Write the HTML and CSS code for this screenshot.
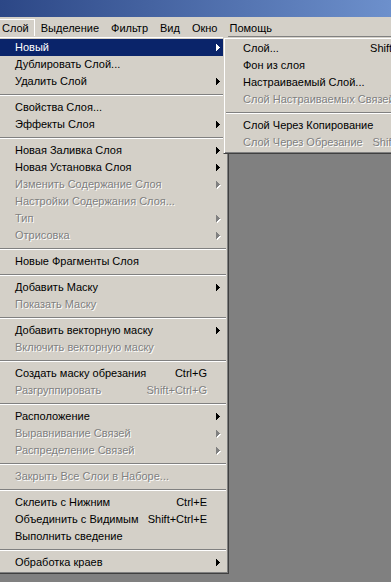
FILE: index.html
```html
<!DOCTYPE html>
<html lang="ru">
<head>
    <meta charset="UTF-8">
    <meta name="viewport" content="width=device-width, initial-scale=1.0">
    <title>Слой</title>
    <link rel="stylesheet" href="styles.css">
</head>
<body>

    <!-- Заголовок окна -->
    <div class="titlebar"></div>

    <!-- Строка меню -->
    <div class="menubar">
        <span class="mb-item open">Слой</span>
        <span class="mb-item">Выделение</span>
        <span class="mb-item">Фильтр</span>
        <span class="mb-item">Вид</span>
        <span class="mb-item">Окно</span>
        <span class="mb-item">Помощь</span>
    </div>

    <!-- Рабочая область -->
    <div class="workspace">

        <!-- Меню Слой -->
        <div class="menu main-menu">
            <div class="item active"><span class="label">Новый</span><span class="key"></span><span class="arrow"><svg width="4" height="7" viewBox="0 0 4 7"><path d="M0 0h1v7h-1zM1 1h1v5h-1zM2 2h1v3h-1zM3 3h1v1h-1z"/></svg></span></div>
            <div class="item"><span class="label">Дублировать Слой...</span><span class="key"></span><span class="arrow"></span></div>
            <div class="item"><span class="label">Удалить Слой</span><span class="key"></span><span class="arrow"><svg width="4" height="7" viewBox="0 0 4 7"><path d="M0 0h1v7h-1zM1 1h1v5h-1zM2 2h1v3h-1zM3 3h1v1h-1z"/></svg></span></div>
            <div class="sep"></div>
            <div class="item"><span class="label">Свойства Слоя...</span><span class="key"></span><span class="arrow"></span></div>
            <div class="item"><span class="label">Эффекты Слоя</span><span class="key"></span><span class="arrow"><svg width="4" height="7" viewBox="0 0 4 7"><path d="M0 0h1v7h-1zM1 1h1v5h-1zM2 2h1v3h-1zM3 3h1v1h-1z"/></svg></span></div>
            <div class="sep"></div>
            <div class="item"><span class="label">Новая Заливка Слоя</span><span class="key"></span><span class="arrow"><svg width="4" height="7" viewBox="0 0 4 7"><path d="M0 0h1v7h-1zM1 1h1v5h-1zM2 2h1v3h-1zM3 3h1v1h-1z"/></svg></span></div>
            <div class="item"><span class="label">Новая Установка Слоя</span><span class="key"></span><span class="arrow"><svg width="4" height="7" viewBox="0 0 4 7"><path d="M0 0h1v7h-1zM1 1h1v5h-1zM2 2h1v3h-1zM3 3h1v1h-1z"/></svg></span></div>
            <div class="item off"><span class="label">Изменить Содержание Слоя</span><span class="key"></span><span class="arrow"><svg width="4" height="7" viewBox="0 0 4 7"><path d="M0 0h1v7h-1zM1 1h1v5h-1zM2 2h1v3h-1zM3 3h1v1h-1z"/></svg></span></div>
            <div class="item off"><span class="label">Настройки Содержания Слоя...</span><span class="key"></span><span class="arrow"></span></div>
            <div class="item off"><span class="label">Тип</span><span class="key"></span><span class="arrow"><svg width="4" height="7" viewBox="0 0 4 7"><path d="M0 0h1v7h-1zM1 1h1v5h-1zM2 2h1v3h-1zM3 3h1v1h-1z"/></svg></span></div>
            <div class="item off"><span class="label">Отрисовка</span><span class="key"></span><span class="arrow"><svg width="4" height="7" viewBox="0 0 4 7"><path d="M0 0h1v7h-1zM1 1h1v5h-1zM2 2h1v3h-1zM3 3h1v1h-1z"/></svg></span></div>
            <div class="sep"></div>
            <div class="item"><span class="label">Новые Фрагменты Слоя</span><span class="key"></span><span class="arrow"></span></div>
            <div class="sep"></div>
            <div class="item"><span class="label">Добавить Маску</span><span class="key"></span><span class="arrow"><svg width="4" height="7" viewBox="0 0 4 7"><path d="M0 0h1v7h-1zM1 1h1v5h-1zM2 2h1v3h-1zM3 3h1v1h-1z"/></svg></span></div>
            <div class="item off"><span class="label">Показать Маску</span><span class="key"></span><span class="arrow"></span></div>
            <div class="sep"></div>
            <div class="item"><span class="label">Добавить векторную маску</span><span class="key"></span><span class="arrow"><svg width="4" height="7" viewBox="0 0 4 7"><path d="M0 0h1v7h-1zM1 1h1v5h-1zM2 2h1v3h-1zM3 3h1v1h-1z"/></svg></span></div>
            <div class="item off"><span class="label">Включить векторную маску</span><span class="key"></span><span class="arrow"></span></div>
            <div class="sep"></div>
            <div class="item"><span class="label">Создать маску обрезания</span><span class="key">Ctrl+G</span><span class="arrow"></span></div>
            <div class="item off"><span class="label">Разгруппировать</span><span class="key">Shift+Ctrl+G</span><span class="arrow"></span></div>
            <div class="sep"></div>
            <div class="item"><span class="label">Расположение</span><span class="key"></span><span class="arrow"><svg width="4" height="7" viewBox="0 0 4 7"><path d="M0 0h1v7h-1zM1 1h1v5h-1zM2 2h1v3h-1zM3 3h1v1h-1z"/></svg></span></div>
            <div class="item off"><span class="label">Выравнивание Связей</span><span class="key"></span><span class="arrow"><svg width="4" height="7" viewBox="0 0 4 7"><path d="M0 0h1v7h-1zM1 1h1v5h-1zM2 2h1v3h-1zM3 3h1v1h-1z"/></svg></span></div>
            <div class="item off"><span class="label">Распределение Связей</span><span class="key"></span><span class="arrow"><svg width="4" height="7" viewBox="0 0 4 7"><path d="M0 0h1v7h-1zM1 1h1v5h-1zM2 2h1v3h-1zM3 3h1v1h-1z"/></svg></span></div>
            <div class="sep"></div>
            <div class="item off"><span class="label">Закрыть Все Слои в Наборе...</span><span class="key"></span><span class="arrow"></span></div>
            <div class="sep"></div>
            <div class="item"><span class="label">Склеить с Нижним</span><span class="key">Ctrl+E</span><span class="arrow"></span></div>
            <div class="item"><span class="label">Объединить с Видимым</span><span class="key">Shift+Ctrl+E</span><span class="arrow"></span></div>
            <div class="item"><span class="label">Выполнить сведение</span><span class="key"></span><span class="arrow"></span></div>
            <div class="sep"></div>
            <div class="item"><span class="label">Обработка краев</span><span class="key"></span><span class="arrow"><svg width="4" height="7" viewBox="0 0 4 7"><path d="M0 0h1v7h-1zM1 1h1v5h-1zM2 2h1v3h-1zM3 3h1v1h-1z"/></svg></span></div>
        </div>

        <!-- Подменю Новый -->
        <div class="menu sub-menu">
            <div class="item"><span class="label">Слой...</span><span class="key">Shift+Ctrl+N</span><span class="arrow"></span></div>
            <div class="item"><span class="label">Фон из слоя</span><span class="key"></span><span class="arrow"></span></div>
            <div class="item"><span class="label">Настраиваемый Слой...</span><span class="key"></span><span class="arrow"></span></div>
            <div class="item off"><span class="label">Слой Настраиваемых Связей</span><span class="key"></span><span class="arrow"></span></div>
            <div class="sep"></div>
            <div class="item"><span class="label">Слой Через Копирование</span><span class="key">Ctrl+J</span><span class="arrow"></span></div>
            <div class="item off"><span class="label">Слой Через Обрезание</span><span class="key">Shift+Ctrl+J</span><span class="arrow"></span></div>
        </div>

    </div>

</body>
</html>
```

FILE: styles.css
```css
* {
    box-sizing: border-box;
}
body {
    margin: 0;
    width: 391px;
    height: 582px;
    overflow: hidden;
    background: #808080;
    color: #000;
    font-family: "Liberation Sans", Arial, sans-serif;
    font-size: 11px;
}
.titlebar {
    height: 17px;
    background: linear-gradient(to right, #2c4786, #6d90cc);
}
.menubar {
    height: 19px;
    padding-top: 2px;
    margin-left: -4px;
    background: #d4d0c8;
    display: flex;
    align-items: flex-start;
}
.mb-item {
    height: 18px;
    line-height: 17px;
    padding: 0 5px;
    border: 1px solid transparent;
    white-space: nowrap;
}
.mb-item.open {
    border-color: #fff;
}
.workspace {
    position: relative;
}
.menu {
    background: #d4d0c8;
    border: 1px solid;
    border-color: #d4d0c8 #404040 #404040 #d4d0c8;
    box-shadow: inset 1px 1px #fff, inset -1px -1px #808080;
    padding: 2px;
}
.main-menu {
    width: 232px;
    margin-left: -3px;
}
.sub-menu {
    position: absolute;
    left: 223px;
    top: 1px;
    width: 229px;
}
.item {
    display: flex;
    height: 17px;
    line-height: 17px;
    padding-left: 15px;
    white-space: nowrap;
}
.sub-menu .item {
    padding-left: 17px;
}
.item .label {
    flex: 1;
}
.item .arrow {
    width: 19px;
    display: flex;
    align-items: center;
    padding-left: 9px;
}
.item .arrow svg {
    fill: #000;
}
.item.active {
    background: #0a246a;
    color: #fff;
}
.item.active .arrow svg {
    fill: #fff;
}
.item.off {
    color: #808080;
    text-shadow: 1px 1px 0 #fff;
}
.item.off .arrow svg {
    fill: #808080;
    filter: drop-shadow(1px 1px 0 #fff);
}
.sep {
    height: 2px;
    margin: 4px 0 3px;
    border-top: 1px solid #808080;
    border-bottom: 1px solid #fff;
}
```
